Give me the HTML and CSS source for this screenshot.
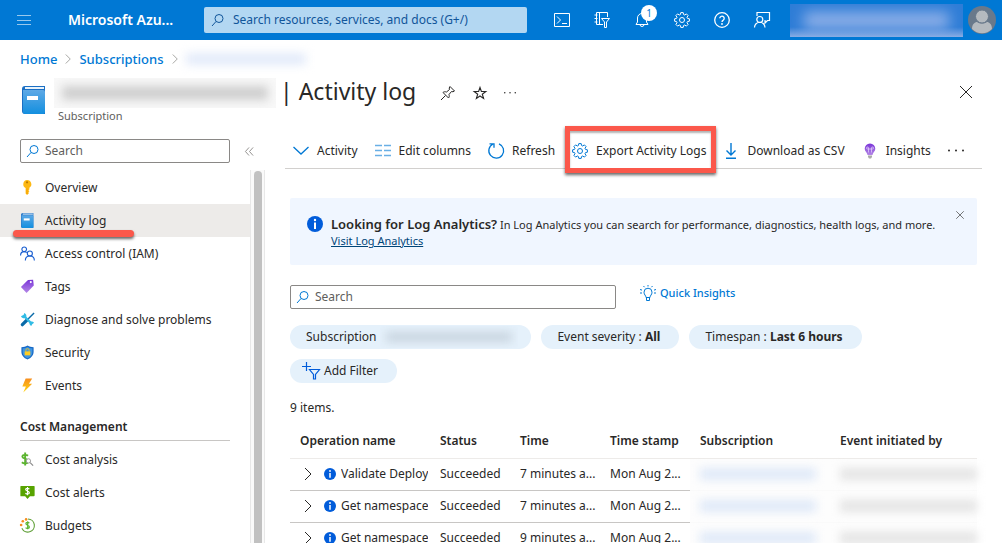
FILE: index.html
```html
<!DOCTYPE html>
<html lang="en">
<head>
    <meta charset="UTF-8">
    <meta name="viewport" content="width=device-width, initial-scale=1.0">
    <title>Activity log - Microsoft Azure</title>
    <link rel="stylesheet" href="styles.css">
</head>
<body>
    <!-- Shared icons -->
    <svg class="sprite" aria-hidden="true">
        <symbol id="icon-search" viewBox="0 0 16 16"><g fill="none" stroke="currentColor"><circle cx="9" cy="6.500" r="4"/><path d="M6 9.500 2 14"/></g></symbol>
        <symbol id="icon-close" viewBox="0 0 16 16"><path d="m2 2 12 12M14 2 2 14" fill="none" stroke="currentColor"/></symbol>
        <symbol id="icon-dots" viewBox="0 0 16 16"><g fill="currentColor"><circle cx="1" cy="7.500" r="1"/><circle cx="8" cy="7.500" r="1"/><circle cx="15" cy="7.500" r="1"/></g></symbol>
        <symbol id="icon-right" viewBox="0 0 16 16"><path d="m5 2 6 6-6 6" fill="none" stroke="currentColor"/></symbol>
        <symbol id="icon-gear" viewBox="0 0 16 16"><g fill="none" stroke="currentColor" stroke-linejoin="round"><circle cx="8" cy="8" r="2.500"/><path d="m6.800.6 2.400 0 .4 1.900 1.100.5 1.700-1.100 1.700 1.700L13 5.300l.5 1.100 1.900.4v2.400l-1.900.4-.5 1.100 1.100 1.700-1.700 1.700-1.700-1.100-1.100.5-.4 1.900H6.800l-.4-1.900-1.100-.5-1.700 1.100-1.700-1.700L3 10.700l-.5-1.100L.6 9.200V6.800l1.900-.4L3 5.300 1.900 3.600l1.700-1.700L5.300 3l1.100-.5z"/></g></symbol>
        <symbol id="icon-info" viewBox="0 0 16 16"><circle cx="8" cy="8" r="8" fill="#015cda"/><circle cx="8" cy="4" r="1.200" fill="#fff"/><path d="M7 6.500h2V13H7z" fill="#fff"/></symbol>
        <symbol id="icon-book" viewBox="0 0 24 28"><path d="M3 0h20v28H3a3 3 0 0 1-3-3V3a3 3 0 0 1 3-3z" fill="#1b6fc4"/><path d="M3 1h19v2H3z" fill="#e8f3fb"/><path d="M1 4h20a2 2 0 0 1 2 2v20a2 2 0 0 1-2 2H3a2 2 0 0 1-2-2z" fill="url(#blue)"/><path d="M5 10h11v4H5z" fill="#fff"/></symbol>
        <linearGradient id="blue" x2="0" y2="1"><stop stop-color="#5ea9e6"/><stop offset="1" stop-color="#138fdf"/></linearGradient>
        <linearGradient id="purple" x2="0" y2="1"><stop stop-color="#7a35d8"/><stop offset="1" stop-color="#b487e6"/></linearGradient>
        <linearGradient id="gold" x2="0" y2="1"><stop stop-color="#f78d1e"/><stop offset="1" stop-color="#ffd70f"/></linearGradient>
    </svg>

    <header class="topbar">
        <button class="menu-button" aria-label="Show portal menu">
            <svg class="icon" viewBox="0 0 16 16"><path d="M1 3.500h14M1 8.500h14M1 12.500h14" stroke="currentColor" stroke-width="1.200"/></svg>
        </button>
        <a class="brand" href="#">Microsoft Azu...</a>
        <div class="search-box global-search">
            <svg class="icon"><use href="#icon-search"/></svg>
            <input type="text" aria-label="Search resources" placeholder="Search resources, services, and docs (G+/)">
        </div>
        <nav class="top-icons">
            <button aria-label="Cloud Shell"><svg class="icon" viewBox="0 0 16 16"><path d="M.5 1.500h15v13H.5zM3 4.500 6.500 8 3 11.500M8 11.500h5" fill="none" stroke="currentColor"/></svg></button>
            <button aria-label="Directories"><svg class="icon" viewBox="0 0 16 16"><path d="M9 12.500H2.500v-12h11V5M5.500.5v12M.5 3h3M.5 6.500h3M.5 10h3M7.500 6.500h8L12.500 10v5.500h-2V10z" fill="none" stroke="currentColor"/></svg></button>
            <button class="bell" aria-label="Notifications"><svg class="icon" viewBox="0 0 16 16"><path d="M2 12.500h12L12.500 10V6A4.500 4.500 0 0 0 3.500 6v4zM6 12.500a2 2 0 0 0 4 0" fill="none" stroke="currentColor"/></svg><span class="badge">1</span></button>
            <button aria-label="Settings"><svg class="icon"><use href="#icon-gear"/></svg></button>
            <button aria-label="Help"><svg class="icon" viewBox="0 0 16 16"><g fill="none" stroke="currentColor" stroke-width="1.300"><circle cx="8" cy="8" r="7.300"/><path d="M5.800 6.300a2.200 2.200 0 1 1 3.500 1.800C8.300 8.700 8 9 8 10"/></g><circle cx="8" cy="12" r=".9" fill="currentColor"/></svg></button>
            <button aria-label="Feedback"><svg class="icon" viewBox="0 0 16 16"><path d="M3 4V.5h12.500v8h-2L11 11V8.500h-.5M.5 15.500a5 5 0 0 1 10.500 0" fill="none" stroke="currentColor" stroke-width="1.200"/><circle cx="5.800" cy="7.500" r="3" fill="none" stroke="currentColor" stroke-width="1.200"/></svg></button>
        </nav>
        <div class="account"><span class="account-name"></span></div>
        <svg class="avatar" viewBox="0 0 28 28"><circle cx="14" cy="14" r="14" fill="#69798b"/><path d="M4 23c0-5 3-7 5-7 3 2 7 2 10 0 2 0 5 2 5 7a14 14 0 0 1-20 0z" fill="#b5babf"/><circle cx="14" cy="10.500" r="6.500" fill="#b5babf" stroke="#69798b"/></svg>
    </header>

    <nav class="breadcrumb">
        <a href="#">Home</a>
        <svg><use href="#icon-right"/></svg>
        <a href="#">Subscriptions</a>
        <svg><use href="#icon-right"/></svg>
        <span class="hidden-text crumb-hidden"></span>
    </nav>

    <div class="page-head">
        <svg class="page-icon"><use href="#icon-book"/></svg>
        <div class="page-title">
            <div class="title-row">
                <span class="title-hidden"><span class="hidden-text"></span></span>
                <h1>| Activity log</h1>
                <button aria-label="Pin"><svg class="icon" viewBox="0 0 16 16"><path d="M10 1.500 14.500 6l-1.500.8-1.500-.3L9 9.500c.5 1.500.3 2.500-.5 3.500L3 7.500c1-.8 2-1 3.500-.5l3-2.500-.3-1.500zM5.500 10.500 1 15" fill="none" stroke="currentColor"/></svg></button>
                <button aria-label="Favorite"><svg class="icon" viewBox="0 0 16 16"><path d="m8 2.500 1.400 4h4.400l-3.500 2.700 1.300 4.300L8 11 4.400 13.500l1.300-4.300-3.500-2.700h4.400z" fill="none" stroke="currentColor" stroke-width="1.100"/></svg></button>
                <button aria-label="More"><svg class="small-dots"><use href="#icon-dots"/></svg></button>
            </div>
            <p>Subscription</p>
        </div>
        <button class="page-close" aria-label="Close"><svg class="icon"><use href="#icon-close"/></svg></button>
    </div>

    <div class="blade">
        <aside class="sidebar">
            <div class="side-search">
                <div class="search-box">
                    <svg class="icon"><use href="#icon-search"/></svg>
                    <input type="text" aria-label="Search menu" placeholder="Search">
                </div>
                <button class="collapse" aria-label="Collapse"><svg viewBox="0 0 10 10"><path d="M4.500.5.5 5l4 4.500M9 .5 5 5l4 4.500" fill="none" stroke="currentColor"/></svg></button>
            </div>
            <div class="menu-scroll">
                <nav class="menu">
                    <a href="#"><svg class="menu-icon" viewBox="0 0 16 16"><path d="M7.500 0a4.500 4.500 0 0 1 2.500 8.300V10l-1 1 1 1-1 1 .5 1L7.500 16 6 14.500V8.500A4.500 4.500 0 0 1 7.500 0z" fill="#fdb813"/><circle cx="7.500" cy="2.500" r="1.200" fill="#b97900"/><path d="M7 9h1v6H7z" fill="#f59f00"/></svg>Overview</a>
                    <a href="#" class="selected"><svg class="menu-icon"><use href="#icon-book"/></svg>Activity log<span class="underline"></span></a>
                    <a href="#"><svg class="menu-icon" viewBox="0 0 16 16"><g fill="none" stroke="#1a5fd0" stroke-width="1.200"><circle cx="4.500" cy="3.500" r="2.500"/><circle cx="10.500" cy="8" r="2.700"/><path d="M.6 10c0-2.500 1.700-4 3.900-4 1 0 2 .3 2.700 1M5.700 15.500c0-3 2-4.800 4.800-4.800s4.800 1.800 4.800 4.800"/></g></svg>Access control (IAM)</a>
                    <a href="#"><svg class="menu-icon" viewBox="0 0 16 16"><path d="M8.500 1 14 .8l.7 6.200L7 15 1 8.500z" fill="url(#purple)"/><circle cx="11.500" cy="3.300" r="1.100" fill="#fff"/></svg>Tags</a>
                    <a href="#"><svg class="menu-icon" viewBox="0 0 16 16"><path d="m2.500 13.500 5-5" stroke="#0a6aa8" stroke-width="3.500" stroke-linecap="round"/><path d="m7 9 8-8" stroke="#0a6aa8" stroke-width="1.500"/><path d="m4 4 8.500 8.500" stroke="#32bce5" stroke-width="2.500"/><path d="M4.500 1 4 3 1 4.500a3.500 3.500 0 0 0 5.500 1.300A3.500 3.500 0 0 0 4.500 1zM12 15l1-2 2-1.500a3 3 0 0 0-4.500-.8A3 3 0 0 0 12 15z" fill="#32bce5"/></svg>Diagnose and solve problems</a>
                    <a href="#"><svg class="menu-icon" viewBox="0 0 16 16"><path d="M8 .5c2 1.500 4 1.700 6.500 1.800v5C14.500 11 12 14 8 15.500 4 14 1.500 11 1.500 7.300v-5C4 2.200 6 2 8 .5z" fill="#1668c5"/><path d="M8 2c1.600 1 3.200 1.300 5.200 1.400v4c0 3-2 5.300-5.200 6.700-3.200-1.400-5.200-3.700-5.200-6.700v-4C4.800 3.300 6.400 3 8 2z" fill="#3f95e2"/><path d="M6.300 7V5.500a1.700 1.700 0 0 1 3.400 0V7" fill="none" stroke="#e7bd28"/><path d="M5 6.800h6V11H5z" fill="#ffcc22"/></svg>Security</a>
                    <a href="#"><svg class="menu-icon" viewBox="0 0 16 16"><path d="M6 .5h7L9.500 6H13L3.500 15.500 6.300 9H2.500z" fill="url(#gold)"/></svg>Events</a>
                    <h2>Cost Management</h2>
                    <a href="#"><svg class="menu-icon" viewBox="0 0 16 16"><path d="M8.500 4C7 2.600 2.500 2.700 2.500 5S8.500 7 8.500 9.800s-4.500 3-6.500 1.200M5.500.5v14" fill="none" stroke="#5cb430" stroke-width="2"/><circle cx="9" cy="9.500" r="2.300" fill="#fff" stroke="#999"/><path d="m10.800 11.300 3.200 3.200" stroke="#8d8d8d" stroke-width="1.400"/></svg>Cost analysis</a>
                    <a href="#"><svg class="menu-icon" viewBox="0 0 16 16"><path d="M1 1h14a.6.600 0 0 1 .6.600V11a1 1 0 0 1-1 1h-4L8 15l-2.500-3H1a.6.600 0 0 1-.6-.6V1.600A.6.600 0 0 1 1 1z" fill="#57a300"/><path d="M10 4.300C8.700 3.300 6 3.300 6 4.700S10 6.500 10 8.200 7 10 5.800 8.800M8 2v9" fill="none" stroke="#fff" stroke-width="1.200"/></svg>Cost alerts</a>
                    <a href="#"><svg class="menu-icon" viewBox="0 0 16 16"><path d="M8.500 1A7 7 0 1 1 2 11" fill="none" stroke="#5f9f37" stroke-width="1.200"/><g fill="#f78d1e"><circle cx="6.500" cy="1.500" r="1.400"/><circle cx="3" cy="3.500" r="1.400"/><circle cx="1.200" cy="7.500" r="1.400"/></g><path d="M10 5.500C9 4.300 6.300 4.300 6.300 6S10 7.700 10 9.500s-3 2-4 .7M8.200 3.500V12" fill="none" stroke="#5cb430" stroke-width="1.300"/></svg>Budgets</a>
                </nav>
                <div class="scrollbar"><div class="thumb"></div></div>
            </div>
        </aside>

        <main class="content">
            <div class="toolbar">
                <button><svg class="icon blue" viewBox="0 0 16 16"><path d="m.5 4 7.500 7L15.500 4" fill="none" stroke="currentColor" stroke-width="1.300"/></svg>Activity</button>
                <button><svg class="icon light-blue" viewBox="0 0 16 16"><path d="M0 2.500h7M9 2.500h7M0 7.500h7M9 7.500h7M0 12.500h7M9 12.500h7" stroke="currentColor" stroke-width="1.400"/></svg>Edit columns</button>
                <button><svg class="icon blue" viewBox="0 0 16 16"><path d="M11 .8A7.400 7.400 0 1 1 5 1M1.500.8H6v4" fill="none" stroke="currentColor" stroke-width="1.300"/></svg>Refresh</button>
                <button class="export"><svg class="icon blue"><use href="#icon-gear"/></svg>Export Activity Logs<span class="highlight"></span></button>
                <button><svg class="icon blue" viewBox="0 0 16 16"><path d="M8 0v12M3.500 7.500 8 12l4.500-4.500M3 15.300h10" fill="none" stroke="currentColor" stroke-width="1.400"/></svg>Download as CSV</button>
                <button><svg class="icon" viewBox="0 0 16 16"><path d="M8 .5a5.300 5.300 0 0 1 5.300 5.300c0 2.700-2.300 3.400-2.800 6.200h-5C5 9.200 2.700 8.500 2.700 5.800A5.300 5.300 0 0 1 8 .5z" fill="url(#purple)"/><path d="M6.500 9.500V5a1 1 0 1 0-1 1h5a1 1 0 1 0-1-1v4.500" fill="none" stroke="#e6d7fa" stroke-width=".7"/><path d="M6 12.500h4v1.500L9 15.500H7L6 14z" fill="#aaa"/></svg>Insights</button>
                <button aria-label="More commands"><svg class="icon"><use href="#icon-dots"/></svg></button>
            </div>

            <div class="banner">
                <svg class="icon"><use href="#icon-info"/></svg>
                <p><strong>Looking for Log Analytics?</strong> In Log Analytics you can search for performance, diagnostics, health logs, and more.<br><a href="#">Visit Log Analytics</a></p>
                <button aria-label="Dismiss"><svg><use href="#icon-close"/></svg></button>
            </div>

            <div class="query">
                <div class="search-box">
                    <svg class="icon"><use href="#icon-search"/></svg>
                    <input type="text" aria-label="Search logs" placeholder="Search">
                </div>
                <a href="#" class="quick"><svg class="icon" viewBox="0 0 16 16"><path d="M6 12.500c0-2-2-2.700-2-5.300a4 4 0 0 1 8 0c0 2.600-2 3.300-2 5.300zM6.500 12.500V15.500h3v-3M8 0v1.500M3.500 1l1 1.200M12.500 1l-1 1.200M0 4.500l2 .6M16 4.500l-2 .6M0 8h2M14 8h2" fill="none" stroke="currentColor"/></svg>Quick Insights</a>
            </div>

            <div class="filters">
                <button class="pill">Subscription <span class="pill-hidden"><span class="hidden-text"></span></span></button>
                <button class="pill">Event severity :&nbsp;<b>All</b></button>
                <button class="pill">Timespan :&nbsp;<b>Last 6 hours</b></button>
                <button class="pill add"><svg viewBox="0 0 18 18"><path d="M4.500 0v9M0 4.500h9M7.500 7.500h10l-4 5V17h-2v-4.500z" fill="none" stroke="currentColor" stroke-width="1.200"/></svg>Add Filter</button>
            </div>

            <p class="count">9 items.</p>

            <table class="log">
                <thead>
                    <tr><th class="col-name">Operation name</th><th class="col-status">Status</th><th class="col-time">Time</th><th class="col-time">Time stamp</th><th class="col-sub">Subscription</th><th>Event initiated by</th></tr>
                </thead>
                <tbody>
                    <tr>
                        <td><div class="operation"><button aria-label="Expand"><svg class="icon"><use href="#icon-right"/></svg></button><svg class="row-info"><use href="#icon-info"/></svg><span>Validate Deploy</span></div></td>
                        <td>Succeeded</td><td>7 minutes a...</td><td>Mon Aug 2...</td>
                        <td class="redacted"><span class="hidden-text link"></span></td><td class="redacted"><span class="hidden-text"></span></td>
                    </tr>
                    <tr>
                        <td><div class="operation"><button aria-label="Expand"><svg class="icon"><use href="#icon-right"/></svg></button><svg class="row-info"><use href="#icon-info"/></svg><span>Get namespace</span></div></td>
                        <td>Succeeded</td><td>7 minutes a...</td><td>Mon Aug 2...</td>
                        <td class="redacted"><span class="hidden-text link"></span></td><td class="redacted"><span class="hidden-text"></span></td>
                    </tr>
                    <tr>
                        <td><div class="operation"><button aria-label="Expand"><svg class="icon"><use href="#icon-right"/></svg></button><svg class="row-info"><use href="#icon-info"/></svg><span>Get namespace</span></div></td>
                        <td>Succeeded</td><td>9 minutes a...</td><td>Mon Aug 2...</td>
                        <td class="redacted"><span class="hidden-text link"></span></td><td class="redacted"><span class="hidden-text"></span></td>
                    </tr>
                </tbody>
            </table>
        </main>
    </div>
</body>
</html>
```
FILE: styles.css
```css
* {
    box-sizing: border-box;
}
body {
    margin: 0;
    height: 100vh;
    overflow: hidden;
    display: flex;
    flex-direction: column;
    font-family: "Noto Sans", "Open Sans", sans-serif;
    font-size: 12px;
    line-height: 16px;
    color: #292827;
    background-color: #fff;
}
p, h1, h2 {
    margin: 0;
}
a {
    color: #0078d4;
    text-decoration: none;
}
button {
    display: flex;
    align-items: center;
    padding: 0;
    border: none;
    background: none;
    color: inherit;
    font: inherit;
    cursor: pointer;
}
svg {
    flex: none;
    overflow: visible;
}
.sprite {
    position: absolute;
    width: 0;
    height: 0;
}
.icon {
    width: 16px;
    height: 16px;
}
.blue {
    color: #0078d4;
}
.light-blue {
    color: #69afe5;
}
/* Blurred placeholder for private values */
.hidden-text {
    display: block;
    height: 12px;
    background-color: #e4e4e4;
    filter: blur(5px);
}

/* Search boxes */
.search-box {
    display: flex;
    align-items: center;
    gap: 4px;
    height: 24px;
    padding-left: 4px;
    border: 1px solid #8a8886;
    border-radius: 2px;
    color: #0078d4;
}
.search-box input {
    flex: 1;
    min-width: 0;
    padding: 0;
    border: none;
    outline: none;
    background: none;
    font: inherit;
}
.search-box input::placeholder {
    color: #605e5c;
    opacity: 1;
}

/* Top bar */
.topbar {
    display: flex;
    align-items: center;
    flex: none;
    height: 40px;
    padding: 0 6px 0 16px;
    background-color: #0078d4;
    color: #fff;
}
.menu-button {
    opacity: 0.6;
}
.brand {
    width: 136px;
    margin-left: 36px;
    color: #fff;
    font-size: 14px;
    font-weight: 600;
}
.global-search {
    flex: 1;
    height: 26px;
    gap: 7px;
    padding-left: 6px;
    border: none;
    background-color: #b3d7f2;
    color: #10559a;
}
.global-search input::placeholder {
    color: #10559a;
}
.top-icons {
    display: flex;
    gap: 24px;
    margin: 0 20px 0 27px;
}
.bell {
    position: relative;
}
.badge {
    position: absolute;
    top: -7px;
    right: -7px;
    width: 16px;
    height: 16px;
    border-radius: 8px;
    background-color: #fff;
    color: #0078d4;
    font-size: 10px;
}
.account {
    width: 173px;
    height: 33px;
    margin-right: 5px;
    padding: 8px 14px;
    overflow: hidden;
    background: linear-gradient(#2e7dd7 70%, #8aade4);
}
.account-name {
    display: block;
    height: 17px;
    background-color: #8fb0e8;
    filter: blur(7px);
}
.avatar {
    width: 28px;
    height: 28px;
}

/* Breadcrumb and title */
.breadcrumb {
    display: flex;
    align-items: center;
    flex: none;
    height: 38px;
    padding-left: 20px;
    gap: 5px;
    color: #8a8886;
    font-size: 13px;
}
.breadcrumb a {
    font-weight: 500;
}
.breadcrumb svg {
    width: 12px;
    height: 12px;
}
.crumb-hidden {
    width: 120px;
    background-color: #e3ebfa;
}
.page-head {
    display: flex;
    flex: none;
    height: 56px;
    padding: 0 28px 0 22px;
}
.page-icon {
    width: 24px;
    height: 28px;
    margin-top: 8px;
}
.page-title {
    flex: 1;
    margin-left: 8px;
}
.page-title p {
    margin-left: 4px;
    color: #605e5c;
    font-size: 11px;
}
.title-row {
    display: flex;
    align-items: center;
    gap: 16px;
    height: 30px;
}
.title-hidden {
    width: 222px;
    height: 30px;
    margin-right: -12px;
    padding: 8px;
    overflow: hidden;
    background-color: #f8f8f8;
}
.title-hidden .hidden-text {
    height: 14px;
    background-color: #cfcfcf;
}
h1 {
    margin: 0 8px 4px 0;
    font-size: 23px;
    font-weight: 400;
    line-height: 28px;
}
.small-dots {
    width: 12px;
    height: 12px;
}
.page-close {
    height: 28px;
}

/* Sidebar */
.blade {
    display: flex;
    flex: 1;
    min-height: 0;
}
.sidebar {
    display: flex;
    flex-direction: column;
    flex: none;
    width: 265px;
}
.side-search {
    display: flex;
    align-items: center;
    gap: 15px;
    padding: 5px 11px 7px 20px;
}
.side-search .search-box {
    flex: 1;
}
.collapse {
    color: #8a8886;
}
.collapse svg {
    width: 9px;
    height: 9px;
}
.menu-scroll {
    display: flex;
    flex: 1;
    min-height: 0;
}
.menu {
    flex: 1;
    padding-top: 1px;
}
.menu a {
    position: relative;
    display: flex;
    align-items: center;
    gap: 10px;
    height: 33px;
    padding-left: 20px;
    color: #292827;
}
.menu a.selected {
    background-color: #edebe9;
}
.menu-icon {
    width: 15px;
    height: 15px;
}
.menu h2 {
    margin: 14px 20px 2px;
    padding: 3px 0 5px;
    border-bottom: 1px solid #c8c6c4;
    font-size: 12px;
    font-weight: 600;
}
.underline {
    position: absolute;
    left: 13px;
    bottom: 0;
    z-index: 1;
    width: 121px;
    height: 7px;
    border-radius: 4px;
    background-color: #fb584b;
    box-shadow: 0 2px 3px rgba(0, 0, 0, 0.6);
}
.scrollbar {
    width: 15px;
    padding: 1px 2px 0 3px;
    border: 1px solid #e8e8e8;
    border-width: 0 1px;
    background-color: #fafafa;
}
.thumb {
    height: 100%;
    border-radius: 4px 4px 0 0;
    background-color: #c1c1c1;
}

/* Main content */
.content {
    flex: 1;
    min-width: 0;
    padding: 0 20px;
}
.toolbar {
    display: flex;
    gap: 17px;
    height: 35px;
    padding-left: 8px;
    border-bottom: 1px solid #d2d0ce;
    white-space: nowrap;
}
.toolbar button {
    gap: 8px;
}
.export {
    position: relative;
}
.highlight {
    position: absolute;
    inset: -8px -10px -5px -7px;
    border: 5px solid #fb584b;
    box-shadow: 0 2px 3px rgba(0, 0, 0, 0.6), inset 0 2px 2px rgba(0, 0, 0, 0.3);
}
.banner {
    display: flex;
    align-items: flex-start;
    gap: 8px;
    margin: 29px 5px 0;
    padding: 18px 12px 16px 17px;
    border-radius: 2px;
    background-color: #f0f6ff;
    font-size: 11px;
}
.banner p {
    flex: 1;
    white-space: nowrap;
}
.banner strong {
    font-size: 13px;
    font-weight: 600;
}
.banner a {
    color: #004578;
    text-decoration: underline;
}
.banner button svg {
    width: 10px;
    height: 10px;
}
.banner button {
    margin-top: -6px;
}
.query {
    display: flex;
    align-items: flex-start;
    gap: 24px;
    margin: 20px 5px 0;
}
.query .search-box {
    width: 326px;
}
.quick {
    display: flex;
    align-items: center;
    gap: 4px;
    font-size: 11px;
    font-weight: 500;
}
.filters {
    display: flex;
    flex-wrap: wrap;
    gap: 10px;
    max-width: 640px;
    margin: 16px 5px 0;
}
.pill {
    height: 24px;
    padding: 0 19px 0 16px;
    border-radius: 12px;
    background-color: #e5f1fb;
}
.pill-hidden {
    width: 138px;
    height: 22px;
    margin: 0 -6px 0 4px;
    padding: 6px;
    overflow: hidden;
}
.pill-hidden .hidden-text {
    height: 10px;
    background-color: #c8d4df;
}
.add {
    gap: 4px;
    padding-left: 12px;
}
.add svg {
    width: 18px;
    height: 18px;
    color: #015cda;
}
.count {
    margin: 17px 5px 0;
}

/* Log table */
.log {
    width: calc(100% - 10px);
    margin: 8px 5px 0;
    border-collapse: collapse;
    table-layout: fixed;
    white-space: nowrap;
}
.log th {
    height: 34px;
    padding: 0 0 0 10px;
    border-bottom: 1px solid #edebe9;
    font-weight: 600;
    text-align: left;
}
.log td {
    height: 32px;
    padding: 0 0 0 10px;
    border-bottom: 1px solid #c8c6c4;
}
.col-name {
    width: 140px;
}
.col-status {
    width: 80px;
}
.col-time {
    width: 90px;
}
.col-sub {
    width: 140px;
}
.operation {
    display: flex;
    align-items: center;
    overflow: hidden;
}
.operation .icon {
    margin-right: 8px;
}
.operation span {
    overflow: hidden;
}
.row-info {
    width: 12px;
    height: 12px;
    margin-right: 5px;
}
.log td.redacted {
    border-color: #fafafa;
    background-color: #fdfdfd;
}
.redacted .hidden-text {
    width: 100%;
}
.redacted .link {
    width: 116px;
    background-color: #dfe9f8;
}
```
